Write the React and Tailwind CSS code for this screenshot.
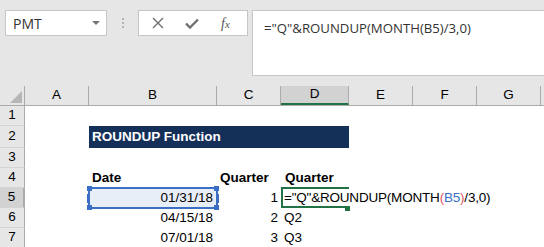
import React from "react";

const cols = [
  { key: "A", w: 64 },
  { key: "B", w: 128 },
  { key: "C", w: 64 },
  { key: "D", w: 68, active: true },
  { key: "E", w: 64 },
  { key: "F", w: 64 },
  { key: "G", w: 64 },
  { key: "", w: 40 },
];

const rows = [
  { n: 1, h: 20 },
  { n: 2, h: 22 },
  { n: 3, h: 20 },
  { n: 4, h: 20 },
  { n: 5, h: 20, active: true },
  { n: 6, h: 20 },
  { n: 7, h: 20 },
];

const cell = "font-['Liberation_Sans',Arial,sans-serif] text-[13.5px] text-black";

function FormulaBar() {
  return (
    <div className="flex h-[86px] items-start bg-[#e6e6e6] pt-[10px] pl-[5px]">
      <div className="flex h-[26px] w-[102px] shrink-0 items-center justify-between border border-[#c6c6c6] bg-white pl-[7px] pr-[6px]">
        <span className="font-['Open_Sans',sans-serif] text-[14px] text-[#333]">PMT</span>
        <span className="h-0 w-0 border-x-[4px] border-t-[4px] border-x-transparent border-t-[#777]" />
      </div>
      <div className="flex w-[31px] shrink-0 flex-col items-center gap-[2px] pt-[8px]">
        <span className="h-[2px] w-[2px] bg-[#b4b4b4]" />
        <span className="h-[2px] w-[2px] bg-[#b4b4b4]" />
        <span className="h-[2px] w-[2px] bg-[#b4b4b4]" />
      </div>
      <div className="flex h-[26px] w-[110px] shrink-0 items-center border border-[#c6c6c6] bg-white">
        <svg width="12" height="12" viewBox="0 0 12 12" className="ml-[13px]">
          <path d="M1 1L11 11M11 1L1 11" stroke="#6e6e6e" strokeWidth="1.4" />
        </svg>
        <svg width="14" height="11" viewBox="0 0 14 11" className="ml-[21px]">
          <path d="M1 5.5L5 9.5L13 1.5" stroke="#707070" strokeWidth="2.4" fill="none" />
        </svg>
        <span className="ml-[22px] font-['Liberation_Serif',serif] text-[14px] italic text-[#555]">
          f<span className="text-[11px]">x</span>
        </span>
      </div>
      <div className="ml-[4px] h-[66px] flex-1 border-y border-l border-[#c6c6c6] bg-white pl-[11px] pt-[4px]">
        <span className="font-['Open_Sans',sans-serif] text-[13.2px] text-[#333]">
          ="Q"&amp;ROUNDUP(MONTH(B5)/3,0)
        </span>
      </div>
    </div>
  );
}

function Header() {
  return (
    <div className="flex h-[20px] overflow-hidden border-b border-[#ababab] bg-[#e6e6e6]">
      <div className="relative w-[25px] shrink-0 border-r border-[#ababab]">
        <svg width="12" height="12" viewBox="0 0 12 12" className="absolute left-[10px] top-[5px]">
          <path d="M12 0V12H0Z" fill="#b6b6b6" />
        </svg>
      </div>
      {cols.map((c, i) => (
        <div
          key={i}
          style={{ width: c.w }}
          className={`flex shrink-0 items-center justify-center border-r border-[#ababab] ${cell} ${
            c.active ? "border-b-2 border-b-[#217346] bg-[#d2d2d2] text-[#217346]" : ""
          }`}
        >
          {c.key}
        </div>
      ))}
    </div>
  );
}

function RowHeaders() {
  return (
    <div className="w-[25px] shrink-0">
      {rows.map((r) => (
        <div
          key={r.n}
          style={{ height: r.h }}
          className={`flex items-center justify-center border-b border-r border-[#d4d4d4] border-r-[#ababab] ${cell} ${
            r.active ? "border-r-2 border-r-[#217346] bg-[#d2d2d2] text-[#217346]" : "bg-[#e6e6e6]"
          }`}
        >
          {r.n}
        </div>
      ))}
    </div>
  );
}

function Handle({ className }) {
  return <span className={`absolute h-[5px] w-[5px] bg-[#3b6fc6] ${className}`} />;
}

function Sheet() {
  return (
    <div className={`flex-1 bg-white ${cell}`}>
      <div className="h-[20px]" />
      <div className="flex h-[22px] items-center">
        <div className="w-[64px]" />
        <div className="flex h-full w-[260px] items-center bg-[#142f58] pl-[3px] font-bold text-white">
          ROUNDUP Function
        </div>
      </div>
      <div className="h-[20px]" />
      <div className="flex h-[20px] items-end font-bold">
        <div className="w-[64px]" />
        <div className="w-[128px] pl-[3px]">Date</div>
        <div className="w-[64px] pl-[3px]">Quarter</div>
        <div className="w-[68px] pl-[4px]">Quarter</div>
      </div>
      <div className="flex h-[20px] items-center">
        <div className="w-[64px]" />
        <div className="relative flex h-full w-[128px] items-center justify-end bg-[#e8eef8] pr-[4px]">
          <span className="absolute -inset-x-[1px] -inset-y-[1px] border-2 border-[#3b6fc6]" />
          <Handle className="-left-[2px] -top-[2px]" />
          <Handle className="-right-[2px] -top-[2px]" />
          <Handle className="-left-[2px] -bottom-[2px]" />
          <Handle className="-right-[2px] -bottom-[2px]" />
          <span className="absolute -left-[2px] top-[6px] h-[9px] w-[3px] bg-[#3b6fc6]" />
          <span className="absolute -right-[2px] top-[6px] h-[9px] w-[3px] bg-[#3b6fc6]" />
          <span className="relative">01/31/18</span>
        </div>
        <div className="w-[64px] pr-[3px] text-right">1</div>
        <div className="relative flex h-full w-[68px] items-center whitespace-nowrap">
          <span className="absolute -top-[1px] left-0 h-[21px] w-[68px] border-y-2 border-l-2 border-[#217346]" />
          <span className="absolute -bottom-[3px] left-[64px] h-[5px] w-[5px] bg-[#217346]" />
          <span className="relative pl-[3px] tracking-[-0.2px]">
            ="Q"&amp;ROUNDUP(MONTH<span className="text-[#e0566b]">(</span>
            <span className="text-[#3b6fc6]">B5</span>
            <span className="text-[#e0566b]">)</span>/3,0)
          </span>
          <span className="relative ml-[2px] h-[17px] w-[2px] bg-black" />
        </div>
      </div>
      <div className="flex h-[20px] items-center">
        <div className="w-[64px]" />
        <div className="w-[128px] pr-[4px] text-right">04/15/18</div>
        <div className="w-[64px] pr-[3px] text-right">2</div>
        <div className="w-[68px] pl-[3px]">Q2</div>
      </div>
      <div className="flex h-[20px] items-center">
        <div className="w-[64px]" />
        <div className="w-[128px] pr-[4px] text-right">07/01/18</div>
        <div className="w-[64px] pr-[3px] text-right">3</div>
        <div className="w-[68px] pl-[3px]">Q3</div>
      </div>
    </div>
  );
}

export default function App() {
  return (
    <div className="h-[247px] w-[544px] overflow-hidden bg-white">
      <FormulaBar />
      <Header />
      <div className="flex">
        <RowHeaders />
        <Sheet />
      </div>
    </div>
  );
}
